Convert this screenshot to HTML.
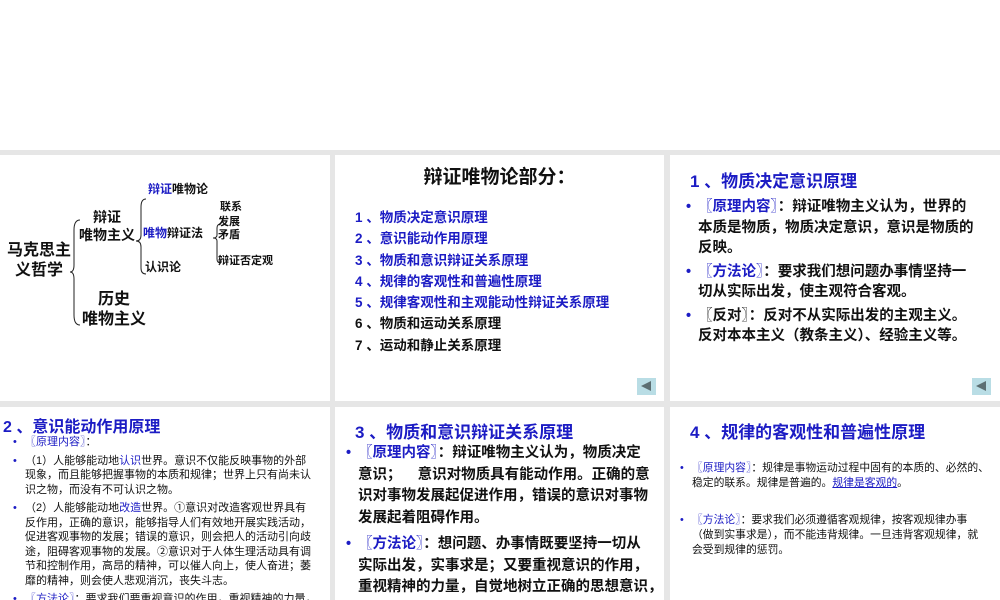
<!DOCTYPE html>
<html><head><meta charset="utf-8"><style>
body{margin:0;width:1000px;height:600px;overflow:hidden;background:#fff;font-family:"Liberation Sans","Noto Sans CJK SC",sans-serif;font-weight:bold;color:#111}
.bg{position:absolute;left:0;top:150px;width:1000px;height:450px;background:#e6e6e6}
.p{position:absolute;background:#fff;overflow:hidden}
.a{position:absolute;white-space:nowrap}
.b{color:#1c1cc4}
.nav{position:absolute;width:19px;height:17px;background:#b9dde5}
.nav:after{content:"";position:absolute;left:4px;top:3px;border-right:10px solid #5c6e72;border-top:5.5px solid transparent;border-bottom:5.5px solid transparent}
.ul li{list-style:none;position:relative}
.ul li:before{content:"•";position:absolute;left:-12px;color:#1c1cc4}
</style></head><body>
<div class="bg"></div>

<div class="p" style="left:0;top:155px;width:330px;height:246px">
<svg width="330" height="246" style="position:absolute;left:0;top:0" fill="none" stroke="#222" stroke-width="1">
<path d="M80 65 Q74 65 74 75 L74 110 Q74 117 70 117 Q74 117 74 124 L74 160 Q74 170 80 170"/>
<path d="M146 44 Q141 44 141 52 L141 80 Q141 86 136 86 Q141 86 141 92 L141 113 Q141 119 146 119"/>
<path d="M221 69 Q217 69 217 73 L217 80 Q217 83 213 83 Q217 83 217 86 L217 104 Q217 108 221 108"/>
</svg>
<div class="a" style="left:5px;top:86px;font-size:16px;line-height:20px;text-align:center;width:68px">马克思主<br>义哲学</div>
<div class="a" style="left:78px;top:53px;font-size:14px;line-height:18px;text-align:center;width:58px">辩证<br>唯物主义</div>
<div class="a" style="left:80px;top:135px;font-size:16px;line-height:20px;text-align:center;width:68px">历史<br>唯物主义</div>
<div class="a" style="left:148px;top:25px;font-size:12px"><span class="b">辩证</span>唯物论</div>
<div class="a" style="left:143px;top:69px;font-size:12px"><span class="b">唯物</span>辩证法</div>
<div class="a" style="left:145px;top:103px;font-size:12px">认识论</div>
<div class="a" style="left:220px;top:43px;font-size:11px">联系</div>
<div class="a" style="left:218px;top:61px;font-size:11px;line-height:13px">发展<br>矛盾</div>
<div class="a" style="left:218px;top:97px;font-size:11px">辩证否定观</div>
</div>

<div class="p" style="left:335px;top:155px;width:329px;height:246px">
<div class="a" style="left:0;width:329px;text-align:center;top:7px;font-size:19px">辩证唯物论部分：</div>
<div class="a" style="left:20px;top:52px;font-size:13.5px;line-height:21.3px">
<span class="b">1 、物质决定意识原理<br>2 、意识能动作用原理<br>3 、物质和意识辩证关系原理<br>4 、规律的客观性和普遍性原理<br>5 、规律客观性和主观能动性辩证关系原理</span><br>6 、物质和运动关系原理<br>7 、运动和静止关系原理</div>
<div class="nav" style="left:302px;top:223px"></div>
</div>

<div class="p" style="left:670px;top:155px;width:330px;height:246px">
<div class="a b" style="left:20px;top:12px;font-size:17px">1 、物质决定意识原理</div>
<ul class="ul a" style="margin:0;padding:0;left:28px;top:42px;font-size:14.5px;line-height:20.5px">
<li><span class="b">〖原理内容〗</span>：辩证唯物主义认为，世界的<br>本质是物质，物质决定意识，意识是物质的<br>反映。</li>
<li style="margin-top:3px"><span class="b">〖方法论〗</span>：要求我们想问题办事情坚持一<br>切从实际出发，使主观符合客观。</li>
<li style="margin-top:3px">〖反对〗：反对不从实际出发的主观主义。<br>反对本本主义（教条主义）、经验主义等。</li>
</ul>
<div class="nav" style="left:302px;top:223px"></div>
</div>

<div class="p" style="left:0;top:407px;width:330px;height:193px">
<div class="a b" style="left:3px;top:6px;font-size:16px">2 、意识能动作用原理</div>
<ul class="ul a" style="margin:0;padding:0;left:25px;top:28px;font-size:11px;line-height:14.5px;font-weight:normal">
<li><span class="b">〖原理内容〗</span>：</li>
<li style="margin-top:4px">（1）人能够能动地<span class="b">认识</span>世界。意识不仅能反映事物的外部<br>现象，而且能够把握事物的本质和规律；世界上只有尚未认<br>识之物，而没有不可认识之物。</li>
<li style="margin-top:4px">（2）人能够能动地<span class="b">改造</span>世界。①意识对改造客观世界具有<br>反作用，正确的意识，能够指导人们有效地开展实践活动，<br>促进客观事物的发展；错误的意识，则会把人的活动引向歧<br>途，阻碍客观事物的发展。②意识对于人体生理活动具有调<br>节和控制作用，高昂的精神，可以催人向上，使人奋进；萎<br>靡的精神，则会使人悲观消沉，丧失斗志。</li>
<li style="margin-top:4px"><span class="b">〖方法论〗</span>：要求我们要重视意识的作用，重视精神的力量，<br>自觉地树立正确的思想意识，克服错误的思想意识。</li>
</ul>
</div>

<div class="p" style="left:335px;top:407px;width:329px;height:193px">
<div class="a b" style="left:20px;top:11px;font-size:17px">3 、物质和意识辩证关系原理</div>
<ul class="ul a" style="margin:0;padding:0;left:23px;top:36px;font-size:14.5px;line-height:21.5px">
<li><span class="b">〖原理内容〗</span>：辩证唯物主义认为，物质决定<br>意识； &nbsp;&nbsp;&nbsp;意识对物质具有能动作用。正确的意<br>识对事物发展起促进作用，错误的意识对事物<br>发展起着阻碍作用。</li>
<li style="margin-top:5px"><span class="b">〖方法论〗</span>：想问题、办事情既要坚持一切从<br>实际出发，实事求是；又要重视意识的作用，<br>重视精神的力量，自觉地树立正确的思想意识，<br>克服错误的思想意识。</li>
</ul>
</div>

<div class="p" style="left:670px;top:407px;width:330px;height:193px">
<div class="a b" style="left:20px;top:11px;font-size:17px">4 、规律的客观性和普遍性原理</div>
<ul class="ul a" style="margin:0;padding:0;left:22px;top:54px;font-size:10.8px;line-height:15px;font-weight:normal">
<li><span class="b">〖原理内容〗</span>：规律是事物运动过程中固有的本质的、必然的、<br>稳定的联系。规律是普遍的。<span class="b" style="text-decoration:underline">规律是客观的</span>。</li>
<li style="margin-top:22px"><span class="b">〖方法论〗</span>：要求我们必须遵循客观规律，按客观规律办事<br>（做到实事求是），而不能违背规律。一旦违背客观规律，就<br>会受到规律的惩罚。</li>
</ul>
</div>
</body></html>
